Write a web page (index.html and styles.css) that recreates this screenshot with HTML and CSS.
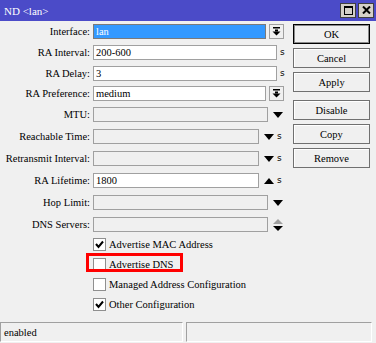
FILE: index.html
```html
<!DOCTYPE html>
<html lang="en">
<head>
  <meta charset="UTF-8" />
  <title>ND &lt;lan&gt;</title>
  <link rel="stylesheet" href="styles.css">
</head>
<body>

  <div class="titlebar">
    <span class="title">ND &lt;lan&gt;</span>
    <div class="title-btns">
      <span class="tbtn">
        <svg width="9" height="9" viewBox="0 0 9 9"><rect x="0.5" y="0.5" width="8" height="8" fill="none" stroke="#000"/><rect x="0" y="0" width="9" height="2" fill="#000"/></svg>
      </span>
      <span class="tbtn">
        <svg width="9" height="8" viewBox="0 0 9 8"><path d="M1 0.5 L8 7.5 M8 0.5 L1 7.5" stroke="#000" stroke-width="2"/></svg>
      </span>
    </div>
  </div>

  <div class="main">
    <div class="form">
      <div class="row">
        <label>Interface:</label>
        <div class="ctl">
          <div class="field f-drop selected">lan</div>
          <span class="drop-btn">
            <svg width="9" height="9" viewBox="0 0 9 9"><rect x="1" y="0" width="7" height="1.5"/><rect x="3" y="2.5" width="3" height="2"/><polygon points="0.5,4.5 8.5,4.5 4.5,8.5"/></svg>
          </span>
        </div>
      </div>
      <div class="row">
        <label>RA Interval:</label>
        <div class="ctl">
          <div class="field f-long">200-600</div>
          <span class="unit">s</span>
        </div>
      </div>
      <div class="row short">
        <label>RA Delay:</label>
        <div class="ctl">
          <div class="field f-long">3</div>
          <span class="unit">s</span>
        </div>
      </div>
      <div class="row">
        <label>RA Preference:</label>
        <div class="ctl">
          <div class="field f-drop">medium</div>
          <span class="drop-btn">
            <svg width="9" height="9" viewBox="0 0 9 9"><rect x="1" y="0" width="7" height="1.5"/><rect x="3" y="2.5" width="3" height="2"/><polygon points="0.5,4.5 8.5,4.5 4.5,8.5"/></svg>
          </span>
        </div>
      </div>
      <div class="row tall">
        <label>MTU:</label>
        <div class="ctl">
          <div class="field f-mid off"></div>
          <span class="arrow"><svg width="10" height="6" viewBox="0 0 10 6"><polygon points="0,0 10,0 5,6"/></svg></span>
        </div>
      </div>
      <div class="row tall">
        <label>Reachable Time:</label>
        <div class="ctl">
          <div class="field f-short off"></div>
          <span class="arrow"><svg width="10" height="6" viewBox="0 0 10 6"><polygon points="0,0 10,0 5,6"/></svg></span>
          <span class="unit">s</span>
        </div>
      </div>
      <div class="row tall">
        <label>Retransmit Interval:</label>
        <div class="ctl">
          <div class="field f-short off"></div>
          <span class="arrow"><svg width="10" height="6" viewBox="0 0 10 6"><polygon points="0,0 10,0 5,6"/></svg></span>
          <span class="unit">s</span>
        </div>
      </div>
      <div class="row tall">
        <label>RA Lifetime:</label>
        <div class="ctl">
          <div class="field f-short">1800</div>
          <span class="arrow"><svg width="10" height="6" viewBox="0 0 10 6"><polygon points="0,6 10,6 5,0"/></svg></span>
          <span class="unit">s</span>
        </div>
      </div>
      <div class="row tall">
        <label>Hop Limit:</label>
        <div class="ctl">
          <div class="field f-mid off"></div>
          <span class="arrow"><svg width="10" height="6" viewBox="0 0 10 6"><polygon points="0,0 10,0 5,6"/></svg></span>
        </div>
      </div>
      <div class="row tall">
        <label>DNS Servers:</label>
        <div class="ctl">
          <div class="field f-mid off"></div>
          <span class="arrow">
            <svg width="10" height="12" viewBox="0 0 10 12"><polygon points="0,5 10,5 5,0" fill="#a0a0a0"/><polygon points="0,7 10,7 5,12"/></svg>
          </span>
        </div>
      </div>

      <div class="checks">
        <div class="check">
          <span class="box"><svg width="11" height="11" viewBox="0 0 11 11"><path d="M2 5 L4.5 8 L9 2.5" fill="none" stroke="#000" stroke-width="2"/></svg></span>
          Advertise MAC Address
        </div>
        <div class="check">
          <span class="box"></span>
          Advertise DNS
          <span class="highlight"></span>
        </div>
        <div class="check">
          <span class="box"></span>
          Managed Address Configuration
        </div>
        <div class="check">
          <span class="box"><svg width="11" height="11" viewBox="0 0 11 11"><path d="M2 5 L4.5 8 L9 2.5" fill="none" stroke="#000" stroke-width="2"/></svg></span>
          Other Configuration
        </div>
      </div>
    </div>

    <div class="buttons">
      <button class="btn default">OK</button>
      <button class="btn">Cancel</button>
      <button class="btn">Apply</button>
      <button class="btn gap">Disable</button>
      <button class="btn">Copy</button>
      <button class="btn">Remove</button>
    </div>
  </div>

  <div class="statusbar">
    <div class="panel left">enabled</div>
    <div class="panel right"></div>
  </div>

</body>
</html>
```

FILE: styles.css
```css
body {
  margin: 0;
  background: #f0f0f0;
  font-family: "Liberation Serif", Tinos, "DejaVu Serif", serif;
  font-size: 10.5px;
  color: #000;
  overflow: hidden;
}

.titlebar {
  height: 21px;
  background: #4b4bc8;
  color: #fff;
  display: flex;
  align-items: center;
  justify-content: space-between;
  padding: 0 2px 0 4px;
  font-size: 11px;
}

.title-btns {
  display: flex;
  gap: 2px;
  margin-top: -1px;
}

.tbtn {
  width: 14px;
  height: 13px;
  background: #d4d0c8;
  border: 1px solid #404040;
  display: flex;
  align-items: center;
  justify-content: center;
}

.main {
  display: flex;
  padding-top: 3px;
}

.form {
  width: 293px;
}

.row {
  display: grid;
  grid-template-columns: 90px 1fr;
  column-gap: 3px;
  height: 21px;
}

.row.short {
  height: 20px;
}

.row.tall {
  height: 22px;
}

.row label {
  text-align: right;
  line-height: 15px;
  white-space: nowrap;
}

.ctl {
  display: flex;
  align-items: flex-start;
}

.field {
  box-sizing: border-box;
  height: 15px;
  line-height: 13px;
  padding: 0 2px;
  background: #fff;
  border: 1px solid #a0a0a0;
  white-space: nowrap;
}

.field.off {
  background: #f0f0f0;
}

.field.selected {
  background: #3399ff;
  color: #fff;
  border-color: #7a7a7a;
}

.f-drop { width: 173px; }
.f-long { width: 184px; }
.f-mid { width: 175px; }
.f-short { width: 166px; }

.drop-btn {
  box-sizing: border-box;
  width: 15px;
  height: 15px;
  margin-left: 3px;
  border: 1px solid #a0a0a0;
  background: #f0f0f0;
  display: flex;
  align-items: center;
  justify-content: center;
}

.unit {
  margin-left: 3px;
  line-height: 15px;
  font-family: "DejaVu Sans", sans-serif;
  font-size: 9px;
}

.arrow {
  width: 10px;
  height: 15px;
  margin-left: 5px;
  display: flex;
  align-items: center;
}

.checks {
  padding-left: 93px;
  margin-top: -1px;
}

.check {
  position: relative;
  display: flex;
  align-items: flex-start;
  height: 20px;
  line-height: 13px;
  white-space: nowrap;
}

.box {
  box-sizing: border-box;
  width: 13px;
  height: 13px;
  margin-right: 3px;
  background: #fff;
  border: 1px solid #8f8f8f;
  display: flex;
  align-items: center;
  justify-content: center;
}

.highlight {
  position: absolute;
  left: -7px;
  top: -5px;
  width: 97px;
  height: 19px;
  box-sizing: border-box;
  border: 3px solid #ff0000;
}

.buttons {
  display: flex;
  flex-direction: column;
  gap: 4px;
  width: 77px;
}

.btn {
  box-sizing: border-box;
  height: 20px;
  padding: 0;
  font-family: inherit;
  font-size: 10.5px;
  color: #000;
  background: #f0f0f0;
  border: 1px solid #707070;
  box-shadow: inset 1px 1px #fff;
}

.btn.default {
  border: 1px solid #000;
  box-shadow: inset 0 0 0 1px #8a8a8a;
}

.btn.gap {
  margin-top: 4px;
}

.statusbar {
  display: flex;
  gap: 3px;
  margin-top: 4px;
  padding-right: 4px;
}

.panel {
  box-sizing: border-box;
  height: 20px;
  padding: 2px 3px;
  border-top: 1px solid #a0a0a0;
  border-left: 1px solid #a0a0a0;
  border-bottom: 1px solid #fff;
  border-right: 1px solid #fff;
  line-height: 15px;
}

.panel.left { width: 183px; }
.panel.right { flex: 1; }
```
